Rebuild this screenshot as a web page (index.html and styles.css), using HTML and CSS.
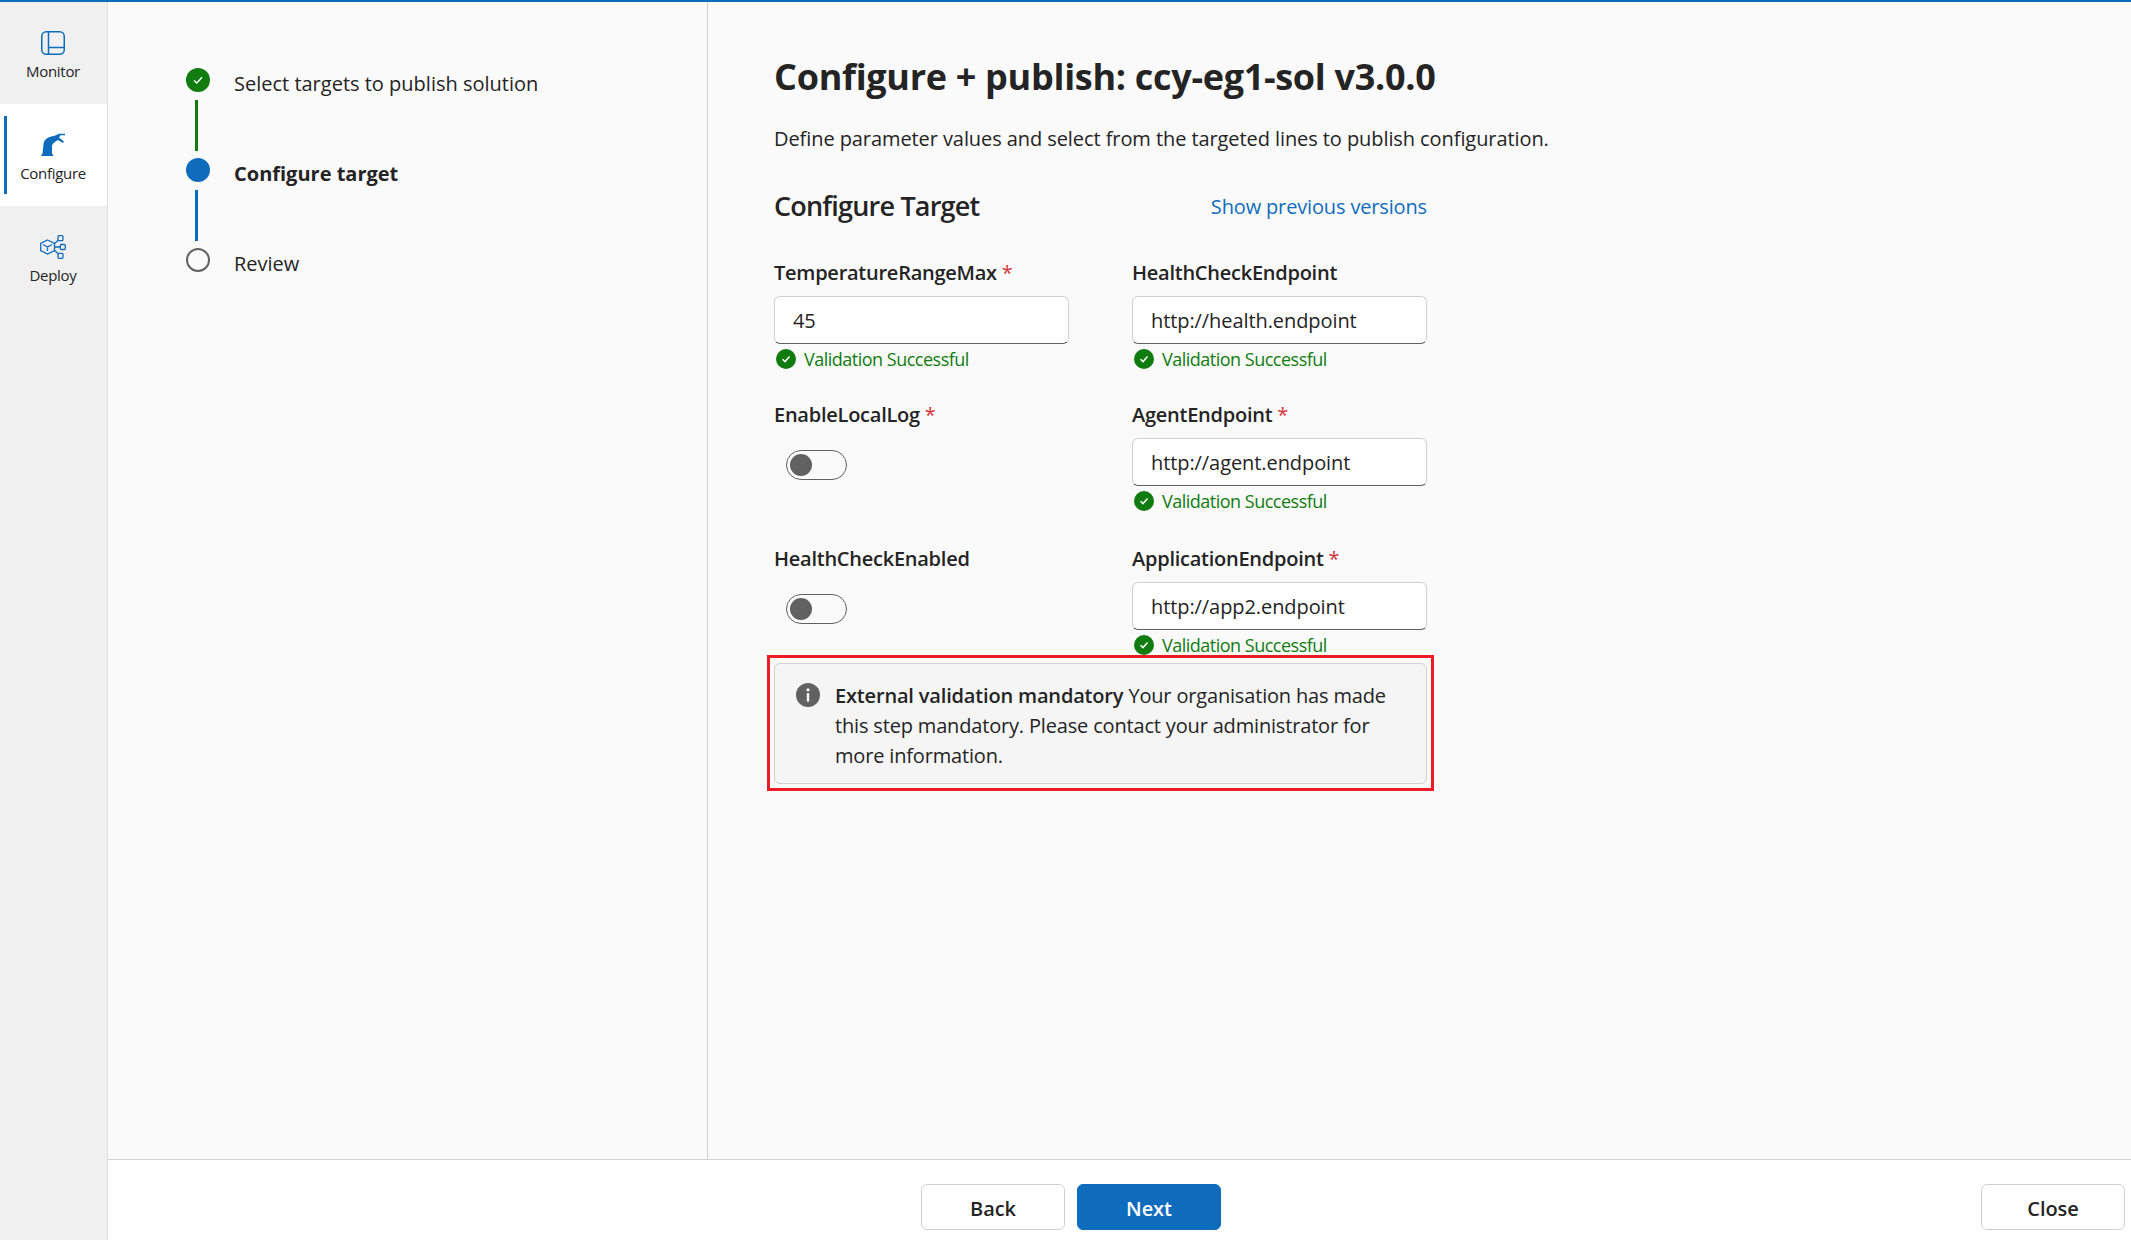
FILE: index.html
```html
<!DOCTYPE html>
<html lang="en">
<head>
    <meta charset="UTF-8">
    <title>Configure + publish</title>
    <link rel="stylesheet" href="styles.css">
</head>
<body>
<div class="app">
    <!-- left nav -->
    <nav class="nav">
        <a class="nav-item">
            <svg class="nav-icon" viewBox="0 0 24 24" fill="none" stroke="#0f6cbd" stroke-width="1.5">
                <rect x="0.75" y="0.75" width="22.5" height="22.5" rx="4.5"/>
                <path d="M7.5 1V23M7.5 16.5H23"/>
            </svg>
            <span>Monitor</span>
        </a>
        <a class="nav-item active">
            <svg class="nav-icon" viewBox="0 0 24 24" fill="#0f6cbd">
                <path d="M0 23L1.5 20.5L2.5 11C3 6 8 3.5 13 3L18 0.8L24 0.8L24 2.3L19.5 2.3L18 4.5L23 8.5L22 10L17 7C14 9 11.5 10 11 13L11 20.5L12.5 23Z"/>
            </svg>
            <span>Configure</span>
        </a>
        <a class="nav-item">
            <svg class="nav-icon wide" viewBox="0 0 26 24" fill="none" stroke="#0f6cbd" stroke-width="1.3">
                <path d="M7.5 5L14.5 8.5V15.5L7.5 19L0.7 15.5V8.5ZM3 9.5L7.5 12L12 9.5M7.5 12V16"/>
                <path d="M14.5 12H20M14 9L18.5 5M14 15L18.5 19"/>
                <rect x="18" y="0.7" width="5" height="5" rx="1"/>
                <rect x="20.3" y="9.5" width="5" height="5" rx="1"/>
                <rect x="18" y="18.3" width="5" height="5" rx="1"/>
            </svg>
            <span>Deploy</span>
        </a>
    </nav>

    <div class="main">
        <div class="panels">
            <!-- stepper -->
            <aside class="steps">
                <div class="step">
                    <span class="dot dot-done">
                        <svg viewBox="0 0 12 12" width="12" height="12" fill="none" stroke="#fff" stroke-width="1.4"><path d="M2 6.5L4.8 9L10 3.2"/></svg>
                    </span>
                    <span class="step-text">Select targets to publish solution</span>
                </div>
                <div class="step-line done"></div>
                <div class="step current">
                    <span class="dot dot-current"></span>
                    <span class="step-text">Configure target</span>
                </div>
                <div class="step-line"></div>
                <div class="step">
                    <span class="dot dot-todo"></span>
                    <span class="step-text">Review</span>
                </div>
            </aside>

            <main class="content">
                <h1>Configure + publish: ccy-eg1-sol v3.0.0</h1>
                <p class="desc">Define parameter values and select from the targeted lines to publish configuration.</p>
                <div class="section-head">
                    <h2>Configure Target</h2>
                    <a class="link">Show previous versions</a>
                </div>

                <div class="form">
                    <div class="field">
                        <label>TemperatureRangeMax <i>*</i></label>
                        <div class="input">45</div>
                        <div class="valid"><span class="valid-icon"><svg viewBox="0 0 12 12" width="12" height="12" fill="none" stroke="#fff" stroke-width="1.5"><path d="M2.5 6.3L5 8.6L9.5 3.6"/></svg></span>Validation Successful</div>
                    </div>
                    <div class="field">
                        <label>HealthCheckEndpoint</label>
                        <div class="input">http://health.endpoint</div>
                        <div class="valid"><span class="valid-icon"><svg viewBox="0 0 12 12" width="12" height="12" fill="none" stroke="#fff" stroke-width="1.5"><path d="M2.5 6.3L5 8.6L9.5 3.6"/></svg></span>Validation Successful</div>
                    </div>
                    <div class="field">
                        <label>EnableLocalLog <i>*</i></label>
                        <div class="toggle"><span></span></div>
                    </div>
                    <div class="field">
                        <label>AgentEndpoint <i>*</i></label>
                        <div class="input">http://agent.endpoint</div>
                        <div class="valid"><span class="valid-icon"><svg viewBox="0 0 12 12" width="12" height="12" fill="none" stroke="#fff" stroke-width="1.5"><path d="M2.5 6.3L5 8.6L9.5 3.6"/></svg></span>Validation Successful</div>
                    </div>
                    <div class="field">
                        <label>HealthCheckEnabled</label>
                        <div class="toggle"><span></span></div>
                    </div>
                    <div class="field">
                        <label>ApplicationEndpoint <i>*</i></label>
                        <div class="input">http://app2.endpoint</div>
                        <div class="valid"><span class="valid-icon"><svg viewBox="0 0 12 12" width="12" height="12" fill="none" stroke="#fff" stroke-width="1.5"><path d="M2.5 6.3L5 8.6L9.5 3.6"/></svg></span>Validation Successful</div>
                    </div>
                </div>

                <!-- red box is part of the screenshot -->
                <div class="highlight">
                    <div class="message">
                        <svg class="message-icon" viewBox="0 0 24 24"><circle cx="12" cy="12" r="12" fill="#616161"/><rect x="10.8" y="10" width="2.4" height="8.5" fill="#f5f5f5"/><circle cx="12" cy="6.8" r="1.6" fill="#f5f5f5"/></svg>
                        <p><b>External validation mandatory</b> Your organisation has made this step mandatory. Please contact your administrator for more information.</p>
                    </div>
                </div>
            </main>
        </div>

        <footer class="footer">
            <button class="btn">Back</button>
            <button class="btn primary">Next</button>
            <button class="btn close">Close</button>
        </footer>
    </div>
</div>
</body>
</html>
```

FILE: styles.css
```css
*{
    margin: 0;
    padding: 0;
    box-sizing: border-box;
}
html,body{
    width: 100%;
    height: 100%;
    overflow: hidden;
}
body{
    font-family: "Open Sans", "Noto Sans", sans-serif;
    font-size: 20px;
    letter-spacing: -0.08px;
    color: #242424;
    background-color: #fafafa;
}
.app{
    display: flex;
    height: 100%;
    border-top: 2px solid #0f6cbd;
}
.nav{
    width: 108px;
    flex-shrink: 0;
    background-color: #f0f0f0;
    border-right: 1px solid #e0e0e0;
}
.nav-item{
    display: flex;
    flex-direction: column;
    align-items: center;
    height: 102px;
    padding: 29px 1px 0 0;
    font-size: 15px;
    letter-spacing: -0.3px;
    line-height: 20px;
}
.nav-item span{
    margin-top: 6px;
}
.nav-item.active{
    position: relative;
    background-color: #fff;
}
.nav-item.active::before{
    content: "";
    position: absolute;
    left: 4px;
    top: 12px;
    bottom: 12px;
    width: 3px;
    background-color: #0f6cbd;
}
.nav-icon{
    width: 24px;
    height: 24px;
}
.nav-icon.wide{
    width: 26px;
}
.main{
    flex: 1;
    display: flex;
    flex-direction: column;
    min-width: 0;
}
.panels{
    flex: 1;
    display: flex;
    min-height: 0;
}
.steps{
    width: 600px;
    flex-shrink: 0;
    padding: 66px 0 0 78px;
    border-right: 1px solid #d1d1d1;
}
.step{
    display: flex;
    align-items: center;
    height: 24px;
    gap: 24px;
    line-height: 24px;
    letter-spacing: 0;
}
.step-text{
    margin-top: 7px;
}
.step.current{
    font-weight: 700;
}
.step-line{
    width: 3px;
    height: 51px;
    margin: 8px 0 7px 9px;
    background-color: #0f6cbd;
}
.step-line.done{
    background-color: #107c10;
}
.dot{
    display: flex;
    align-items: center;
    justify-content: center;
    width: 24px;
    height: 24px;
    border-radius: 50%;
    flex-shrink: 0;
}
.dot-done{
    background-color: #107c10;
}
.dot-current{
    background-color: #0f6cbd;
}
.dot-todo{
    border: 2px solid #616161;
}
.content{
    flex: 1;
    padding: 50px 0 0 66px;
    min-width: 0;
}
h1{
    font-size: 36px;
    font-weight: 700;
    letter-spacing: -0.3px;
    line-height: 50px;
}
.desc{
    margin-top: 23px;
    line-height: 28px;
}
.section-head{
    display: flex;
    justify-content: space-between;
    align-items: center;
    width: 653px;
    margin-top: 34px;
}
h2{
    font-size: 27px;
    font-weight: 600;
    letter-spacing: -0.8px;
    line-height: 38px;
}
.link{
    color: #0f6cbd;
    letter-spacing: -0.15px;
}
.form{
    display: grid;
    grid-template-columns: 295px 295px;
    grid-template-rows: 110px 112px 111px;
    column-gap: 63px;
    row-gap: 32px;
    width: 653px;
    margin-top: 34px;
}
label{
    display: block;
    height: 28px;
    line-height: 28px;
    font-weight: 600;
    letter-spacing: -0.25px;
    margin-bottom: 9px;
}
label i{
    font-style: normal;
    font-weight: 400;
    color: #d13438;
}
.input{
    height: 48px;
    padding: 0 18px;
    line-height: 48px;
    background-color: #fff;
    border: 1px solid #d1d1d1;
    border-bottom-color: #616161;
    border-radius: 6px;
}
.valid{
    display: flex;
    align-items: center;
    gap: 8px;
    height: 22px;
    margin-top: 4px;
    padding-left: 2px;
    font-size: 18px;
    letter-spacing: -0.5px;
    color: #107c10;
}
.valid-icon{
    display: flex;
    align-items: center;
    justify-content: center;
    width: 20px;
    height: 20px;
    border-radius: 50%;
    background-color: #107c10;
}
.toggle{
    width: 61px;
    height: 30px;
    margin: 21px 0 0 12px;
    padding: 3px;
    border: 1px solid #616161;
    border-radius: 15px;
}
.toggle span{
    display: block;
    width: 22px;
    height: 22px;
    border-radius: 50%;
    background-color: #616161;
}
.highlight{
    width: 667px;
    height: 136px;
    margin: -1px 0 0 -7px;
    padding: 5px 4px 4px;
    border: 3px solid #ed1c24;
}
.message{
    display: flex;
    gap: 15px;
    height: 100%;
    padding: 17px 20px 0 21px;
    line-height: 30px;
    letter-spacing: -0.17px;
    background-color: #f5f5f5;
    border: 1px solid #d1d1d1;
    border-radius: 6px;
}
.message b{
    font-weight: 600;
}
.message-icon{
    width: 24px;
    height: 24px;
    flex-shrink: 0;
    margin-top: 2px;
}
.footer{
    display: flex;
    gap: 12px;
    flex-shrink: 0;
    height: 81px;
    padding: 24px 6px 0 813px;
    background-color: #fff;
    border-top: 1px solid #d1d1d1;
}
.btn{
    width: 144px;
    height: 46px;
    padding-top: 2px;
    font: inherit;
    font-weight: 600;
    letter-spacing: inherit;
    color: #242424;
    background-color: #fff;
    border: 1px solid #d1d1d1;
    border-radius: 6px;
}
.btn.primary{
    color: #fff;
    background-color: #0f6cbd;
    border-color: #0f6cbd;
}
.btn.close{
    margin-left: auto;
}
```
